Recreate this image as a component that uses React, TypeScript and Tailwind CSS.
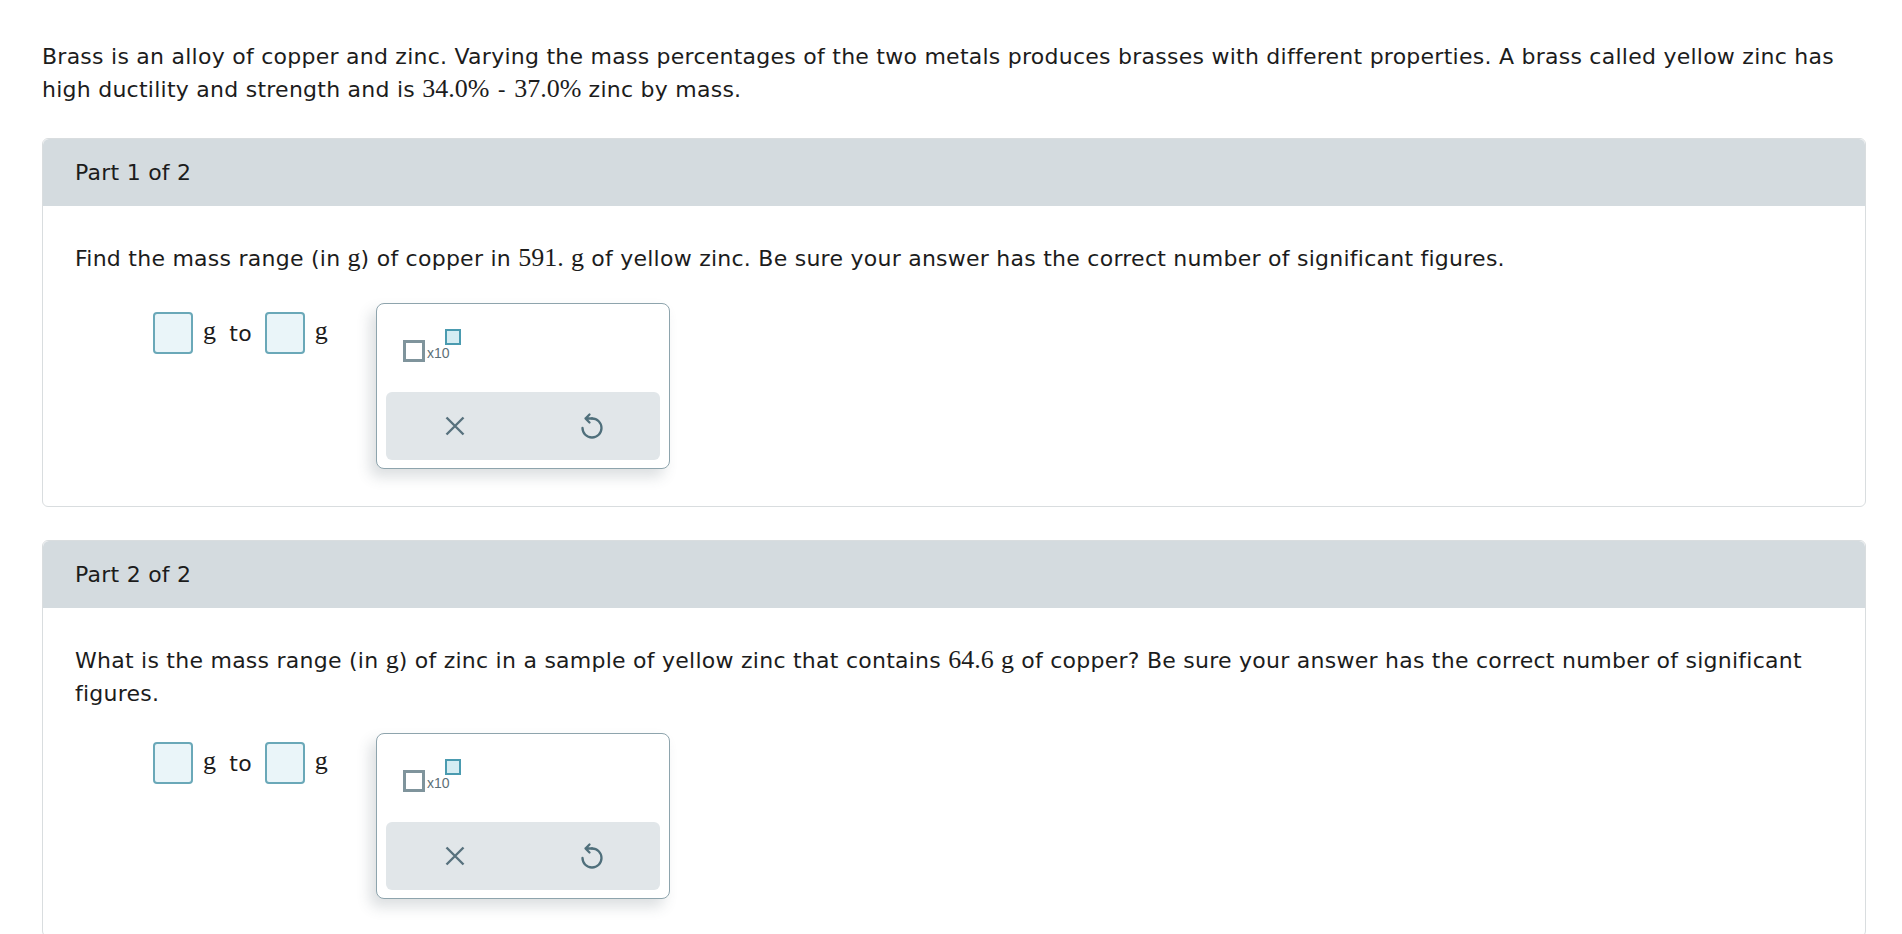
import React from "react";

const serif = { fontFamily: '"Liberation Serif", "Times New Roman", serif' };

function M({ children }: { children: React.ReactNode }) {
  return (
    <span className="text-[26px] leading-[20px] tracking-normal" style={serif}>
      {children}
    </span>
  );
}

function AnswerBox() {
  return (
    <span className="inline-block w-[40px] h-[42px] rounded-[4px] border-2 border-[#6aa8b8] bg-[#eaf5f9]" />
  );
}

function XIcon() {
  return (
    <svg width="20" height="20" viewBox="0 0 20 20" fill="none">
      <path d="M1.5 1.5 L18.5 18.5 M18.5 1.5 L1.5 18.5" stroke="#58717d" strokeWidth="2.4" strokeLinecap="butt" />
    </svg>
  );
}

function UndoIcon() {
  return (
    <svg width="26" height="28" viewBox="0 0 26 28" fill="none">
      <path d="M13 6.5 A9.5 9.5 0 1 1 3.5 16" stroke="#4f6f7b" strokeWidth="2.3" strokeLinecap="round" />
      <path
        d="M13 6.5 H6.5 M10.5 2.5 L6.5 6.5 L10.5 10.5"
        stroke="#4f6f7b"
        strokeWidth="2.3"
        strokeLinecap="round"
        strokeLinejoin="round"
      />
    </svg>
  );
}

function Palette() {
  return (
    <div className="w-[294px] h-[166px] rounded-[8px] border border-[#8ea4ad] bg-white shadow-[-6px_8px_14px_rgba(60,80,90,0.18)] flex flex-col">
      <div className="h-[88px] pl-[26px] pt-[25px]">
        <div className="flex items-start">
          <span className="mt-[11px] inline-block w-[22px] h-[22px] border-[3px] border-[#7f949c] bg-white" />
          <span
            className="mt-[16px] ml-[2px] text-[14px] leading-[16px] tracking-normal text-[#5c6f77]"
            style={{ fontFamily: '"Liberation Sans", Arial, sans-serif' }}
          >
            x10
          </span>
          <span className="-ml-[5px] inline-block w-[16px] h-[16px] border-[2.5px] border-[#4a9bb0] bg-[#d5edf3]" />
        </div>
      </div>
      <div className="mx-[9px] mb-[8px] flex-1 rounded-[6px] bg-[#e1e6e9] flex">
        <div className="flex-1 flex items-center justify-center">
          <XIcon />
        </div>
        <div className="flex-1 flex items-center justify-center">
          <UndoIcon />
        </div>
      </div>
    </div>
  );
}

function AnswerRow() {
  return (
    <div className="flex items-start">
      <div className="ml-[78px] mt-[9px] flex items-center h-[42px] w-[176px]">
        <AnswerBox />
        <span className="ml-[10px] text-[26px] leading-[30px] -mt-[4px]" style={serif}>
          g
        </span>
        <span className="ml-[13px]">to</span>
        <span className="ml-[13px] flex">
          <AnswerBox />
        </span>
        <span className="ml-[10px] text-[26px] leading-[30px] -mt-[4px]" style={serif}>
          g
        </span>
      </div>
      <div className="ml-[47px]">
        <Palette />
      </div>
    </div>
  );
}

function Card({ title, children, last }: { title: string; children: React.ReactNode; last?: boolean }) {
  return (
    <div className={"rounded-[6px] border border-[#d9dddf] bg-white " + (last ? "mt-[33px]" : "mt-[32px]")}>
      <div className="h-[67px] rounded-t-[6px] bg-[#d4dbdf] flex items-center pl-[32px]">{title}</div>
      <div className="px-[32px] pt-[36px] pb-[37px]">{children}</div>
    </div>
  );
}

export default function App() {
  return (
    <div
      className="min-h-screen bg-white text-[22px] leading-[33px] tracking-[0.25px] text-[#1c1c1c] pl-[42px] pr-[36px] pt-[40px]"
      style={{ fontFamily: '"DejaVu Sans", Verdana, sans-serif' }}
    >
      <p>
        Brass is an alloy of copper and zinc. Varying the mass percentages of the two metals produces brasses with
        different properties. A brass called yellow zinc has high ductility and strength and is <M>34.0%</M>{" "}
        <span className="mx-[1px]">-</span> <M>37.0%</M> zinc by mass.
      </p>
      <Card title="Part 1 of 2">
        <p>
          Find the mass range (in <M>g</M>) of copper in <M>591.</M> <M>g</M> of yellow zinc. Be sure your answer has
          the correct number of significant figures.
        </p>
        <div className="mt-[28px]">
          <AnswerRow />
        </div>
      </Card>
      <Card title="Part 2 of 2" last>
        <p>
          What is the mass range (in <M>g</M>) of zinc in a sample of yellow zinc that contains <M>64.6</M>{" "}
          <M>g</M> of copper? Be sure your answer has the correct number of significant figures.
        </p>
        <div className="mt-[23px]">
          <AnswerRow />
        </div>
      </Card>
    </div>
  );
}
